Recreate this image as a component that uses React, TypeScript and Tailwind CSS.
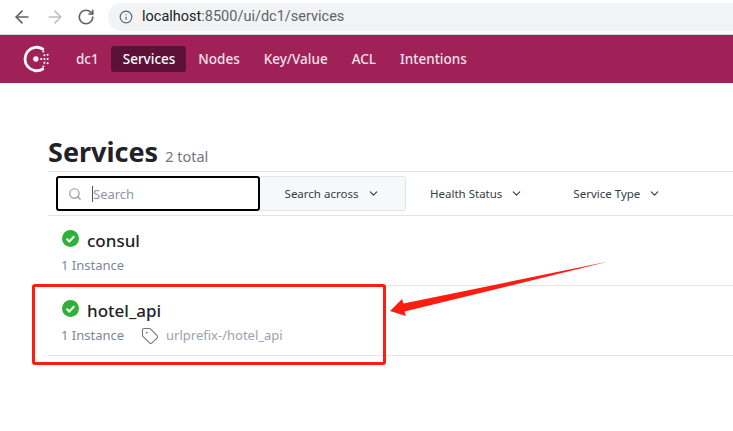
import { ArrowLeft, ArrowRight, ChevronDown, Info, RotateCw, Search, Tag } from 'lucide-react';

const navItems = ['Services', 'Nodes', 'Key/Value', 'ACL', 'Intentions'];

function CheckBadge() {
  return (
    <svg width="17" height="17" viewBox="0 0 17 17" className="mb-[6px] ml-px shrink-0">
      <circle cx="8.5" cy="8.5" r="8.5" fill="#2eb039" />
      <path d="M4.6 8.8l2.7 2.7 5-5.2" fill="none" stroke="#fff" strokeWidth="2" />
    </svg>
  );
}

function ConsulLogo() {
  return (
    <svg width="32" height="32" viewBox="0 0 30 30">
      <path d="M19.5 5.6a11 11 0 1 0 0 18.8" fill="none" stroke="#fff" strokeWidth="2.6" strokeLinecap="round" />
      <circle cx="13" cy="15" r="2.5" fill="#fff" />
      <g fill="#fff">
        <circle cx="18" cy="15" r="1" />
        <circle cx="21" cy="15" r="1" />
        <circle cx="24" cy="15" r="1" />
        <circle cx="21" cy="11.5" r="1" />
        <circle cx="21" cy="18.5" r="1" />
        <circle cx="24" cy="11" r="1" />
        <circle cx="24" cy="19" r="1" />
        <circle cx="20" cy="8" r="1" />
        <circle cx="20" cy="22" r="1" />
      </g>
    </svg>
  );
}

function ServiceRow({ name, tag }: { name: string; tag?: string }) {
  return (
    <div className="h-[70px] border-b border-[#e1e4e9] pl-[13px] pt-[12px]">
      <div className="flex h-[26px] items-center gap-[8px]">
        <CheckBadge />
        <span className="text-[17px] font-medium text-[#1f2228]">{name}</span>
      </div>
      <div className="mt-[2px] flex h-[20px] items-center text-[13px] text-[#7c8797]">
        <span>1 Instance</span>
        {tag && (
          <>
            <Tag size={18} strokeWidth={1.4} className="ml-[17px] text-[#6f7682]" />
            <span className="ml-[7px] text-[#9aa2b0]">{tag}</span>
          </>
        )}
      </div>
    </div>
  );
}

export default function App() {
  return (
    <div className="relative h-[431px] w-[733px] overflow-hidden bg-white font-['Noto_Sans',sans-serif]">
      <div className="flex h-[35px] items-center border-b border-[#d4d5d7] pl-[12px]">
        <ArrowLeft size={20} strokeWidth={2} className="text-[#5f6368]" />
        <ArrowRight size={20} strokeWidth={2} className="ml-[13px] text-[#bcbfc4]" />
        <RotateCw size={18} strokeWidth={2.2} className="ml-[12px] text-[#5f6368]" />
        <div className="ml-[13px] flex h-[28px] flex-1 items-center rounded-l-full bg-[#f1f3f4] pl-[11px] text-[14.5px] font-['Roboto',sans-serif]">
          <Info size={14} className="text-[#5f6368]" />
          <span className="ml-[9px] text-[#202124]">localhost</span>
          <span className="text-[#5f6368]">:8500/ui/dc1/services</span>
        </div>
      </div>

      <nav className="flex h-[48px] items-center bg-[#a02157] pl-[22px] text-[13.5px] font-medium text-[#f3e3ea]">
        <ConsulLogo />
        <span className="ml-[22px]">dc1</span>
        <div className="ml-[12px] flex items-center gap-[6px]">
          {navItems.map((item, i) => (
            <a
              key={item}
              className={
                i === 0
                  ? 'mr-[-3px] rounded-[3px] bg-[#5c1236] py-[3px] pl-[12px] pr-[11px] text-white'
                  : 'px-[9px] py-[3px]'
              }
            >
              {item}
            </a>
          ))}
        </div>
      </nav>

      <main className="pl-[48px] pt-[49px]">
        <h1 className="flex h-[39px] items-baseline leading-[39px] text-[#1f2228]">
          <span className="text-[27px] font-bold">Services</span>
          <span className="ml-[7px] text-[14.5px] text-[#6f7682]">2 total</span>
        </h1>

        <div className="flex h-[45px] items-center border-y border-[#e1e4e9] pl-[8px] text-[11.5px] text-[#363b44]">
          <div className="flex h-[35px] w-[204px] items-center rounded-[3px] border-2 border-black pl-[10px]">
            <Search size={14} strokeWidth={2} className="text-[#8e96a3]" />
            <span className="ml-[10px] h-[16px] w-px bg-[#555]" />
            <span className="pt-[2px] text-[13px] text-[#8e96a3]">Search</span>
          </div>
          <div className="flex h-[35px] w-[146px] items-center justify-center gap-[9px] rounded-r-[3px] border border-l-0 border-[#e1e4e9] bg-[#f7f8fa]">
            Search across
            <ChevronDown size={13} strokeWidth={2} />
          </div>
          <div className="ml-[24px] flex items-center gap-[8px]">
            Health Status
            <ChevronDown size={13} strokeWidth={2} />
          </div>
          <div className="ml-[50px] flex items-center gap-[8px]">
            Service Type
            <ChevronDown size={13} strokeWidth={2} />
          </div>
        </div>

        <ServiceRow name="consul" />
        <ServiceRow name="hotel_api" tag="urlprefix-/hotel_api" />
      </main>

      {/* annotation drawn over the screenshot */}
      <div className="absolute left-[32px] top-[284px] h-[81px] w-[354px] rounded-[3px] border-[3px] border-[#fb1c12]" />
      <svg className="absolute left-0 top-0" width="733" height="431">
        <path d="M608.5 261.5L403.5 303.5 402 299 390 311 406 316 404.5 311.5Z" fill="#fb1c12" />
      </svg>
    </div>
  );
}
